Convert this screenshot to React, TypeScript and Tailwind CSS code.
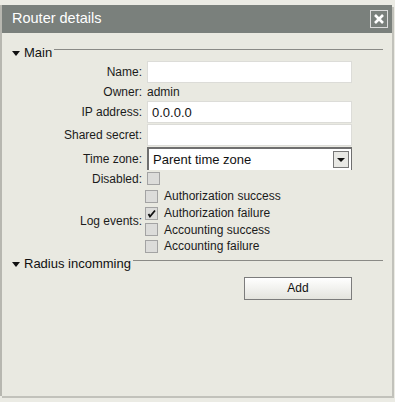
import { useState } from "react";

const font = { fontFamily: '"Liberation Sans", Arial, sans-serif' };

type SectionProps = { title: string };

const SectionHeader: React.FC<SectionProps> = ({ title }) => (
  <div className="flex h-[14px] items-start">
    <span className="mt-[5px] mr-[4px] h-0 w-0 border-x-[4.5px] border-t-[5px] border-x-transparent border-t-[#111]" />
    <span className="text-[13px] leading-[14px] text-[#111]">{title}</span>
    <span className="mt-[3px] ml-[2px] h-px flex-1 bg-[#8a8a86]" />
  </div>
);

const Check: React.FC<{ checked?: boolean; onClick?: () => void }> = ({ checked, onClick }) => (
  <span
    onClick={onClick}
    className="relative flex h-[13px] w-[13px] shrink-0 items-center justify-center border border-[#a3a3a3] bg-[#dcdcda]"
  >
    {checked && (
      <svg width="9" height="9" viewBox="0 0 9 9" className="absolute left-[1px] top-[1px]">
        <path d="M1.5 5 L3 7.5 L8 1.5" stroke="#111" strokeWidth="1.8" fill="none" />
      </svg>
    )}
  </span>
);

const Label: React.FC<{ children: React.ReactNode }> = ({ children }) => (
  <div className="flex items-center justify-end text-[12px] leading-[14px] text-[#1b1b1b]">{children}</div>
);

export default function App() {
  const [events, setEvents] = useState([false, true, false, false]);
  const names = ["Authorization success", "Authorization failure", "Accounting success", "Accounting failure"];

  return (
    <div className="h-[402px] w-[395px] bg-[#ebebe4] pt-[5px] pr-[3px]" style={font}>
      <div className="flex h-[391px] flex-col border-l-2 border-[#b7b7b0] bg-[#e9e9e1] shadow-[2px_2px_0_#c2c2bb]">
        <div className="flex h-[28px] shrink-0 items-center justify-between bg-[#7a807c] pl-[10px] pr-[4px]">
          <span className="text-[14.5px] text-white">Router details</span>
          <span className="flex h-[18px] w-[18px] items-center justify-center border border-[#dcdcdc]">
            <svg width="12" height="12" viewBox="0 0 12 12">
              <path d="M2 2 L10 10 M10 2 L2 10" stroke="#fff" strokeWidth="2.6" />
            </svg>
          </span>
        </div>

        <div className="flex flex-col pl-[10px] pr-[9px] pt-[13px]">
          <SectionHeader title="Main" />

          <div className="mt-[1px] grid grid-cols-[130px_205px] gap-x-[5px] gap-y-[1px]">
            <Label>Name:</Label>
            <input className="h-[22px] border border-[#dcdcd8] bg-white px-[4px] text-[13px] outline-none" />

            <Label>Owner:</Label>
            <div className="flex h-[16px] items-center text-[12px] leading-[14px] text-[#1b1b1b]">admin</div>

            <Label>IP address:</Label>
            <input
              defaultValue="0.0.0.0"
              className="h-[22px] border border-[#dcdcd8] bg-white px-[4px] text-[13px] text-[#111] outline-none"
            />

            <Label>Shared secret:</Label>
            <input className="h-[22px] border border-[#dcdcd8] bg-white px-[4px] text-[13px] outline-none" />

            <Label>Time zone:</Label>
            <div className="flex h-[23px] items-center border-t-2 border-l-2 border-r border-[#6f6f6f] bg-white pl-[4px] pr-[2px]">
              <span className="flex-1 text-[13px] leading-[15px] text-[#111]">Parent time zone</span>
              <span className="flex h-[17px] w-[16px] items-center justify-center border border-[#777] bg-[#e8e8e4]">
                <span className="h-0 w-0 border-x-[4px] border-t-[4px] border-x-transparent border-t-[#111]" />
              </span>
            </div>

            <Label>Disabled:</Label>
            <div className="flex h-[15px] items-center">
              <Check />
            </div>

            <div className="mt-[1px] flex items-center justify-end text-[12px] leading-[14px] text-[#1b1b1b]">
              Log events:
            </div>
            <div className="mt-[1px] -ml-[2px] flex flex-col">
              {names.map((n, i) => (
                <div key={n} className="flex h-[16.7px] items-center gap-[6px]">
                  <Check
                    checked={events[i]}
                    onClick={() => setEvents(events.map((v, j) => (j === i ? !v : v)))}
                  />
                  <span className="text-[12px] leading-[14px] text-[#1b1b1b]">{n}</span>
                </div>
              ))}
            </div>
          </div>

          <div className="mt-[2px]">
            <SectionHeader title="Radius incomming" />
          </div>

          <div className="mt-[6px] flex pl-[232px]">
            <button className="h-[23px] w-[108px] border border-[#7c7c7c] bg-gradient-to-b from-white to-[#e4e4de] text-[12px] text-[#111]">
              Add
            </button>
          </div>
        </div>
      </div>
    </div>
  );
}
